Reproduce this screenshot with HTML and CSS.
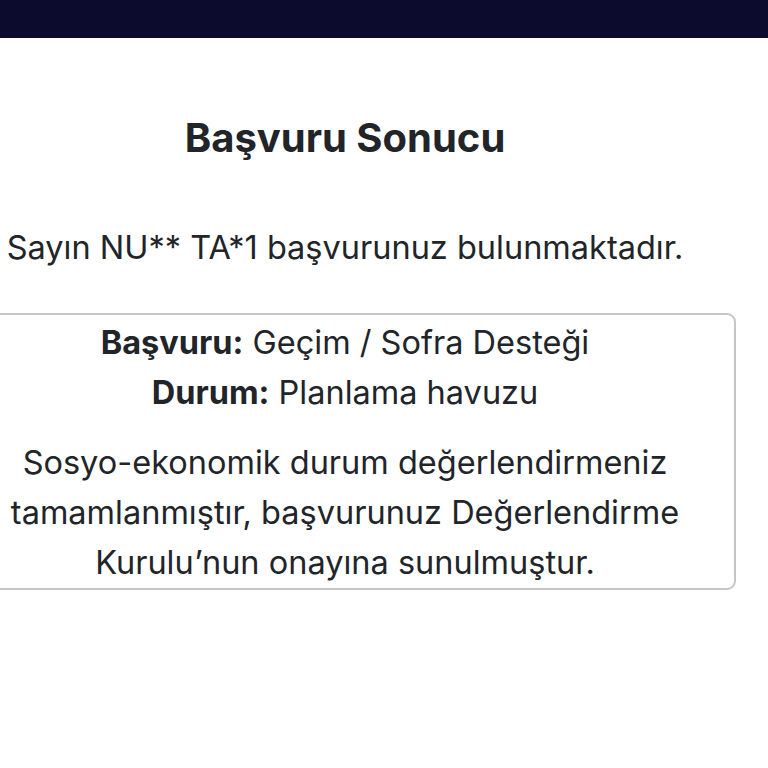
FILE: index.html
```html
<!DOCTYPE html>
<html lang="tr">
<head>
<meta charset="utf-8">
<title>Başvuru Sonucu</title>
<link rel="stylesheet" href="styles.css">
</head>
<body>
<header class="topbar"></header>
<main class="page">
  <h1 class="title">Başvuru Sonucu</h1>
  <p class="lead">Sayın NU** TA*1 başvurunuz bulunmaktadır.</p>
  <section class="result">
    <div class="row"><strong>Başvuru:</strong> Geçim / Sofra Desteği</div>
    <div class="row"><strong>Durum:</strong> Planlama havuzu</div>
    <p class="note">Sosyo-ekonomik durum değerlendirmeniz<br>tamamlanmıştır, başvurunuz Değerlendirme<br>Kurulu’nun onayına sunulmuştur.</p>
  </section>
</main>
</body>
</html>
```

FILE: styles.css
```css
html, body {
  margin: 0;
  padding: 0;
  background: #ffffff;
  overflow: hidden;
}
body {
  font-family: Inter, "Liberation Sans", sans-serif;
  color: #212529;
}
.topbar {
  height: 38px;
  background: #0d0b2d;
}
.page {
  width: 782px;
  margin-left: -46px;
  text-align: center;
}
.title {
  margin: 75px 0 0;
  font-size: 40px;
  font-weight: 700;
  line-height: 50px;
}
.lead {
  margin: 60px 0 0;
  font-size: 32.5px;
  line-height: 50px;
}
.result {
  margin-top: 40px;
  border: 2px solid #c6c6c6;
  border-radius: 9px;
  padding: 3px 0 0;
  font-size: 32.5px;
  line-height: 50px;
}
.row strong {
  font-weight: 700;
}
.note {
  margin: 20px 0 0;
}
```
